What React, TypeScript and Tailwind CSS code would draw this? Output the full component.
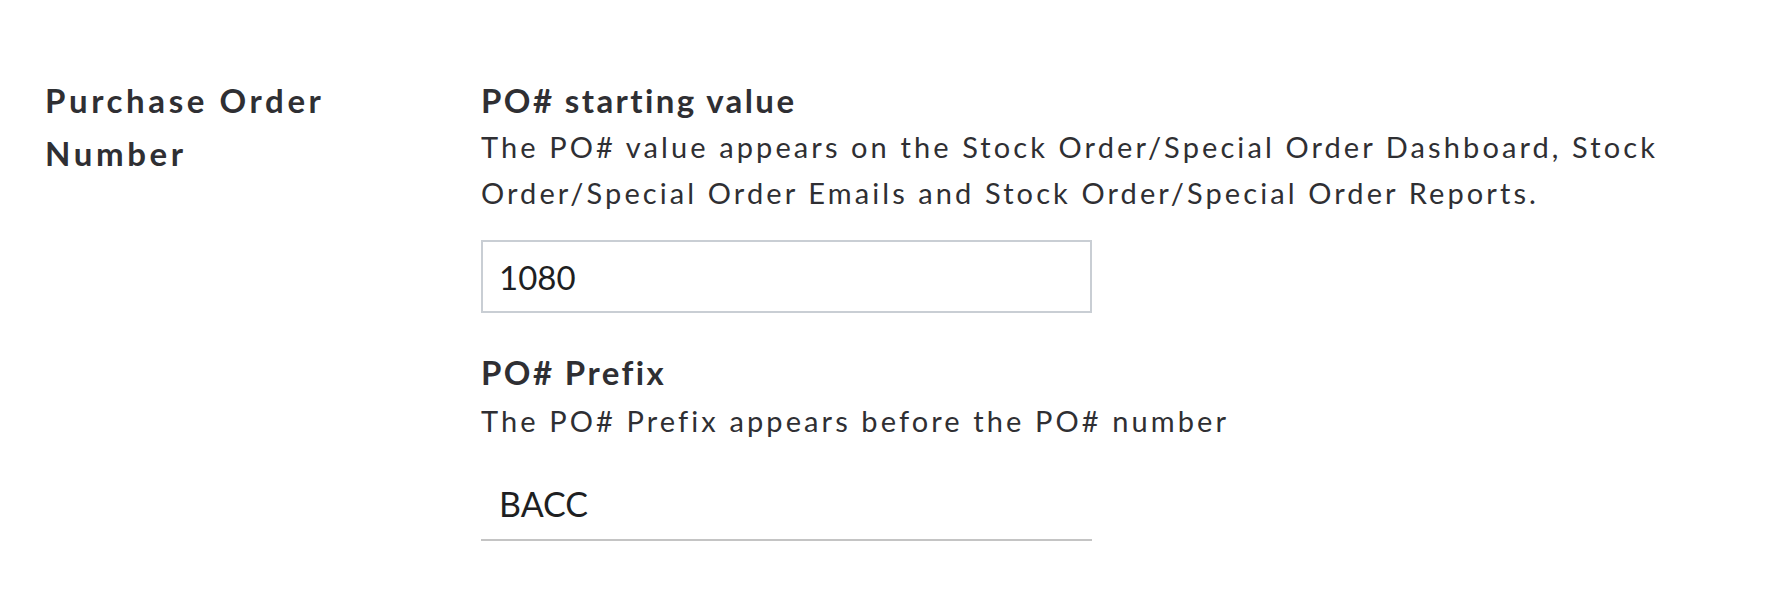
export default function App() {
  return (
    <div className="min-h-[594px] bg-white px-[45px] pt-[74px] font-['Lato',sans-serif] text-[#2f2f33]">
      <div className="flex">
        {/* Section label */}
        <div className="w-[436px] shrink-0">
          <h2 className="text-[33px] font-bold leading-[53px] tracking-[3.6px]">
            Purchase Order
            <br />
            Number
          </h2>
        </div>

        {/* Fields */}
        <div className="flex-1 pt-[6px]">
          <label className="block text-[33px] font-bold leading-[40px] tracking-[2.4px]">
            PO# starting value
          </label>
          <p className="mt-[4px] text-[29px] leading-[46px] tracking-[3.1px]">
            The PO# value appears on the Stock Order/Special Order Dashboard, Stock
            <br />
            Order/Special Order Emails and Stock Order/Special Order Reports.
          </p>
          <input
            type="text"
            defaultValue="1080"
            className="mt-[24px] block h-[73px] w-[611px] border-2 border-[#c9ced4] px-[16px] text-[33px] text-[#1e1f22] outline-none"
          />

          <label className="mt-[39px] block text-[33px] font-bold leading-[40px] tracking-[2.4px]">
            PO# Prefix
          </label>
          <p className="mt-[6px] text-[29px] leading-[46px] tracking-[3.1px]">
            The PO# Prefix appears before the PO# number
          </p>
          <input
            type="text"
            defaultValue="BACC"
            className="mt-[24px] block h-[73px] w-[611px] border-b-2 border-[#c4c4c4] px-[18px] text-[34px] text-[#1e1f22] outline-none"
          />
        </div>
      </div>
    </div>
  )
}
